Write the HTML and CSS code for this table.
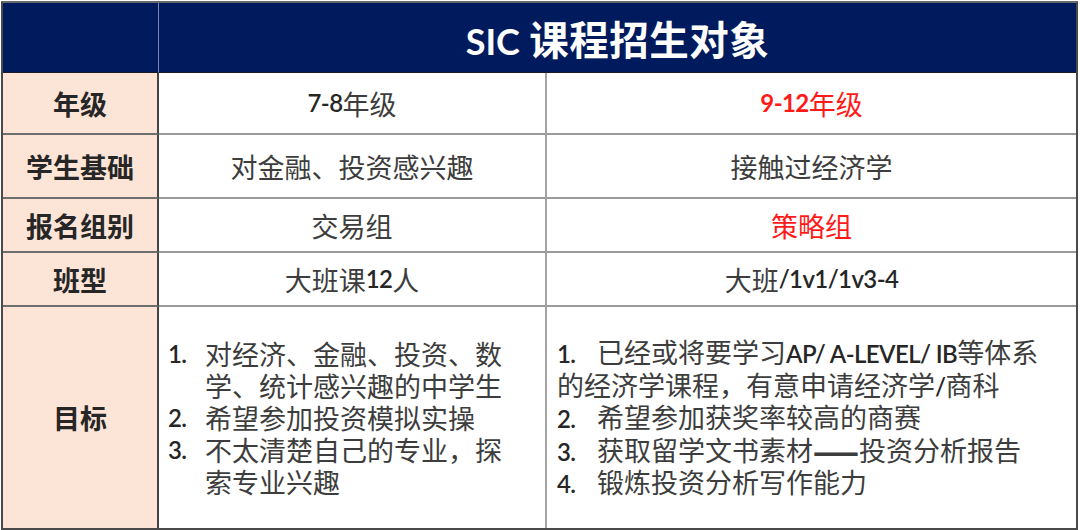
FILE: index.html
```html
<!DOCTYPE html>
<html lang="zh-CN">
<head>
<meta charset="utf-8">
<title>SIC 课程招生对象</title>
<link rel="stylesheet" href="styles.css">
</head>
<body>
<div class="sheet">
  <div class="cell hd hd-corner"></div>
  <div class="cell hd hd-title"><span class="ttl"><span class="lat">SIC</span> 课程招生对象</span></div>

  <div class="cell lbl">年级</div>
  <div class="cell val"><span class="lat">7-8</span>年级</div>
  <div class="cell val last red"><span class="lat b">9-12</span>年级</div>

  <div class="cell lbl">学生基础</div>
  <div class="cell val">对金融、投资感兴趣</div>
  <div class="cell val last">接触过经济学</div>

  <div class="cell lbl">报名组别</div>
  <div class="cell val">交易组</div>
  <div class="cell val last red">策略组</div>

  <div class="cell lbl">班型</div>
  <div class="cell val">大班课<span class="lat">12</span>人</div>
  <div class="cell val last">大班<span class="lat">/1v1/1v3-4</span></div>

  <div class="cell lbl bottom">目标</div>
  <div class="cell val bottom list-cell">
    <ol class="hang">
      <li><span class="num lat">1.</span><span class="txt">对经济、金融、投资、数<br>学、统计感兴趣的中学生</span></li>
      <li><span class="num lat">2.</span><span class="txt">希望参加投资模拟实操</span></li>
      <li><span class="num lat">3.</span><span class="txt">不太清楚自己的专业，探<br>索专业兴趣</span></li>
    </ol>
  </div>
  <div class="cell val last bottom list-cell">
    <div class="flat">
      <p><span class="num2 lat">1.</span>已经或将要学习<span class="lat">AP/ A-LEVEL/ IB</span>等体系<br>的经济学课程，有意申请经济学<span class="lat">/</span>商科</p>
      <p><span class="num2 lat">2.</span>希望参加获奖率较高的商赛</p>
      <p><span class="num2 lat">3.</span>获取留学文书素材<span class="dash">——</span>投资分析报告</p>
      <p><span class="num2 lat">4.</span>锻炼投资分析写作能力</p>
    </div>
  </div>
</div>
</body>
</html>
```

FILE: styles.css
```css
* { box-sizing: border-box; }

html, body {
  margin: 0;
  padding: 0;
  background: #ffffff;
}

body {
  width: 1080px;
  height: 530px;
  overflow: hidden;
  font-family: "Noto Sans CJK SC", "Noto Sans", sans-serif;
}

.sheet {
  margin: 1px 0 0 1px;
  width: 1077px;
  display: grid;
  grid-template-columns: 156px 388px 529px;
  grid-template-rows: 70px 62px 64px 54px 54px 221px;
  border: 2px solid #4a4a4a;
  border-top-color: #6a6a6a;
}

.cell {
  display: flex;
  align-items: center;
  justify-content: center;
  font-size: 27px;
  line-height: 1;
  white-space: nowrap;
}

.lat {
  font-family: "Lato", "Open Sans", sans-serif;
  font-size: 24px;
  letter-spacing: -0.6px;
  line-height: 1;
}

.b { font-weight: 700; }

.hd {
  background: #001b5d;
  border-bottom: 1px solid #1a1a2a;
}

.hd-corner {
  border-right: 1px solid #7b86ad;
}

.hd-title {
  grid-column: 2 / 4;
  color: #ffffff;
  font-weight: 700;
  font-size: 39.5px;
  padding-top: 1px;
}

.ttl {
  letter-spacing: 0.5px;
}

.hd-title .lat {
  font-weight: 700;
  font-size: 36px;
  letter-spacing: 0;
}

.lbl {
  background: #fce4d6;
  color: #262626;
  font-weight: 700;
  border-right: 2px solid #454545;
  border-bottom: 2px solid #6e6e6e;
}

.val {
  color: #3d3d3d;
  border-right: 2px solid #a3a3a3;
  border-bottom: 2px solid #9a9a9a;
}

.val .lat {
  color: #262626;
  font-weight: 600;
}

.val .lat.b {
  font-weight: 700;
}

.val.last {
  border-right: none;
}

.red, .val.red .lat {
  color: #ff1a1a;
}

.bottom {
  border-bottom: none;
}

.list-cell {
  justify-content: flex-start;
}

.hang {
  list-style: none;
  margin: 0 0 0 9px;
  padding: 0;
}

.hang li {
  display: flex;
  line-height: 32px;
}

.hang .num {
  width: 37px;
  flex: none;
  line-height: 32px;
}

.flat {
  margin-left: 10px;
}

.flat p {
  margin: 0;
  line-height: 32.5px;
}

.num2 {
  display: inline-block;
  width: 40px;
}

.dash {
  display: inline-block;
  font-weight: 700;
  transform: scaleY(1.4);
}
```
